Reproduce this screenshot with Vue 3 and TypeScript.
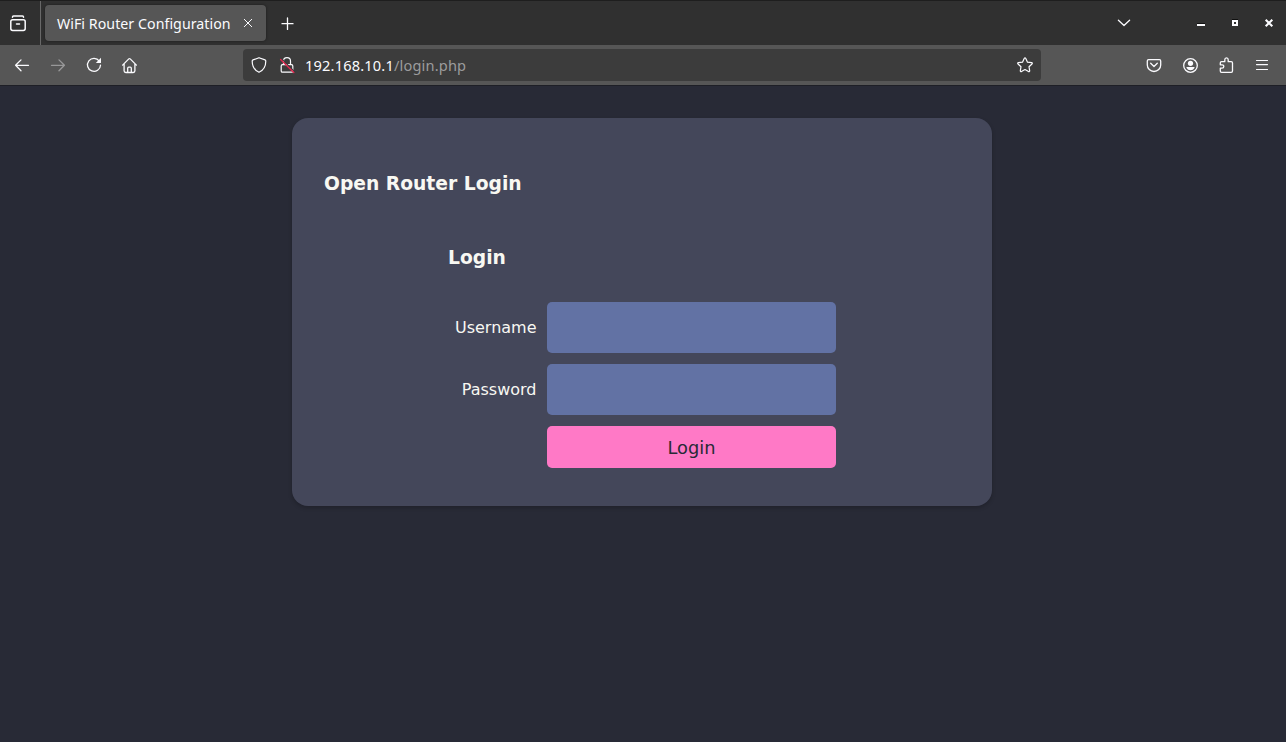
<script setup lang="ts">
import { ref } from 'vue'

const tabTitle = 'WiFi Router Configuration'
const host = '192.168.10.1'
const path = '/login.php'
const username = ref('')
const password = ref('')
</script>

<template>
  <div class="window">
    <header class="tabbar">
      <div class="overview">
        <svg width="20" height="20" viewBox="0 0 20 20">
          <path d="M4.500 4.200v-.2q0-1 1-1h9q1 0 1 1v.2M4.700 6.700h10.600q1.900 0 1.900 1.900v7q0 1.900-1.900 1.900H4.700q-1.900 0-1.900-1.900v-7q0-1.900 1.900-1.900z" />
          <path d="M8.500 10.900h3" />
        </svg>
      </div>
      <div class="tab">
        <span class="title">{{ tabTitle }}</span>
        <svg class="tab-close" width="10" height="10" viewBox="0 0 10 10"><path d="M1.300 1.300l7.400 7.400M8.700 1.300L1.300 8.700" /></svg>
      </div>
      <svg class="plus" width="13" height="13" viewBox="0 0 13 13"><path d="M6.500 1v11.500M1 6.700h11" /></svg>
      <div class="controls">
        <svg class="chevron" width="14" height="10" viewBox="0 0 14 10"><path d="M1.400 2.200L7 7.500l5.600-5.300" /></svg>
        <svg class="control" width="10" height="10" viewBox="0 0 10 10"><path class="fill shade" d="M1 5h8v1H1z" /><path class="fill" d="M1 6h8v2H1z" /></svg>
        <svg class="control" width="10" height="10" viewBox="0 0 10 10"><path class="fill shade" d="M2 1h6v1H2z" /><path class="fill" fill-rule="evenodd" d="M2 2h6v6H2zM4 4v2h2V4z" /></svg>
        <svg class="control" width="10" height="10" viewBox="0 0 10 10"><path class="heavy" d="M1.700 1.700l6.600 6.600M8.300 1.700L1.700 8.300" /></svg>
      </div>
    </header>

    <nav class="toolbar">
      <div class="slots">
        <span class="slot"><svg width="20" height="20" viewBox="0 0 20 20"><path d="M16.500 10.300H3.800M9 4.900L3.600 10.300 9 15.700" /></svg></span>
        <span class="slot disabled"><svg width="20" height="20" viewBox="0 0 20 20"><path d="M3.500 10.300h12.700M11 4.900l5.400 5.400-5.400 5.400" /></svg></span>
        <span class="slot"><svg width="20" height="20" viewBox="0 0 20 20"><path d="M15.300 6.100A6.500 6.500 0 1 0 16.500 10.200" /><path class="fill" d="M17 2.800v4.700q0 .5-.5.5h-4.700z" /></svg></span>
        <span class="slot"><svg width="20" height="20" viewBox="0 0 20 20"><path d="M2.600 10.100l6.200-6.200q.7-.7 1.400 0l6.200 6.200M4.100 9v6.800q0 1.700 1.700 1.700h7.400q1.700 0 1.700-1.700V9M7.700 17.200v-4q0-1 1-1h1.600q1 0 1 1v4" /></svg></span>
      </div>

      <div class="address">
        <svg width="20" height="20" viewBox="0 0 20 20"><path d="M10 2.700l6 2.200q.8.300.8 1.100c0 5-2.200 9.200-6.800 11.300C5.400 15.200 3.200 11 3.200 6q0-.8.8-1.100z" /></svg>
        <svg class="lock" width="20" height="20" viewBox="0 0 20 20">
          <path d="M6.500 9.500V6q0-3.300 3.500-3.300T13.500 6v3.500M5.500 9.700h9q1.300 0 1.300 1.300v4.900q0 1.300-1.300 1.300h-9q-1.300 0-1.300-1.300V11q0-1.300 1.300-1.300z" />
          <path class="gap" d="M4.500 3.700l13 13" />
          <path class="slash" d="M3.600 4.400l13.200 13.100" />
        </svg>
        <span class="url">{{ host }}<span class="path">{{ path }}</span></span>
        <svg class="star" width="20" height="20" viewBox="0 0 20 20"><path d="M9.200 3.500q.8-1.300 1.600 0l1.700 3.700 4.100.5q1.200.3.400 1.300l-3 2.700.7 4.100q0 1.200-1.200.8L10 14.500l-3.500 2.100q-1.200.4-1.200-.8l.7-4.100L3 9q-.8-1 .4-1.300l4.100-.5z" /></svg>
      </div>

      <div class="slots right">
        <span class="slot"><svg width="20" height="20" viewBox="0 0 20 20"><path d="M4.600 4.600h10.800q1.300 0 1.300 1.300v4c0 3.700-3 6.600-6.700 6.600s-6.700-2.900-6.700-6.600v-4q0-1.300 1.300-1.300zM6.700 8.300l3.300 3.200 3.300-3.200" /></svg></span>
        <span class="slot"><svg width="20" height="20" viewBox="0 0 20 20"><circle cx="10.500" cy="10.500" r="6.800" /><circle class="fill" cx="10.500" cy="8.300" r="2.600" /><path class="fill" d="M7 11.900h7q.8 0 .6.800-1.300 2.600-4.100 2.600t-4.100-2.600q-.2-.8.600-.8z" /></svg></span>
        <span class="slot"><svg width="20" height="20" viewBox="0 0 20 20"><path d="M5.500 6.700h3.300V4.800q0-1.900 1.700-1.900t1.700 1.900v1.900h3q1.300 0 1.300 1.300v8q0 1.300-1.300 1.300H5.600q-1.300 0-1.300-1.300v-2.800H6q1.800 0 1.800-1.700T6 9.800H4.300V8q0-1.300 1.200-1.300z" /></svg></span>
        <span class="slot"><svg class="menu" width="20" height="20" viewBox="0 0 20 20"><path d="M4.500 5.500h11M4.500 9.600h11M4.500 14.500h11" /></svg></span>
      </div>
    </nav>

    <main class="page">
      <section class="card">
        <h3 class="heading">Open Router Login</h3>
        <form class="form" @submit.prevent>
          <h3 class="heading">Login</h3>
          <label for="username">Username</label>
          <input id="username" v-model="username" type="text" />
          <label for="password">Password</label>
          <input id="password" v-model="password" type="password" />
          <button type="submit">Login</button>
        </form>
      </section>
    </main>
  </div>
</template>

<style>
html,
body {
  margin: 0;
  background: #282a36;
}
</style>

<style scoped>
.window {
  width: 100%;
  height: 742px;
  display: flex;
  flex-direction: column;
  overflow: hidden;
  font-family: "DejaVu Sans", sans-serif;
  color: #f8f8f2;
}
.window * {
  box-sizing: border-box;
}
svg {
  display: block;
  flex: none;
  fill: none;
  stroke: #fbfbfe;
  stroke-width: 1.3;
  stroke-linecap: round;
  stroke-linejoin: round;
}
.fill {
  fill: #fbfbfe;
  stroke: none;
}
.shade {
  fill: #101010;
}
.tabbar {
  height: 45px;
  flex: none;
  display: flex;
  align-items: center;
  background: #303030;
  border-top: 1px solid #1e1e1e;
}
.overview {
  width: 41px;
  height: 44px;
  padding-left: 8px;
  display: flex;
  align-items: center;
  border-right: 1px solid #686868;
}
.overview svg {
  stroke-width: 1.5;
}
.tab {
  width: 221px;
  height: 36px;
  margin-left: 4px;
  padding: 0 13px 0 12px;
  display: flex;
  align-items: center;
  justify-content: space-between;
  background: #565656;
  border-radius: 4px;
  box-shadow: 0 0 3px rgba(0, 0, 0, 0.45);
  font: 14.2px "Noto Sans", sans-serif;
  letter-spacing: 0.05px;
  color: #fbfbfe;
}
.title {
  white-space: nowrap;
}
.tab-close {
  stroke-width: 1;
}
.plus {
  margin-left: 15px;
  stroke-width: 1.3;
}
.controls {
  margin-left: auto;
  padding-right: 12px;
  display: flex;
  align-items: center;
}
.chevron {
  margin-right: 65px;
}
.control + .control {
  margin-left: 24px;
}
.heavy {
  stroke-width: 2.1;
  stroke-linecap: butt;
}
.toolbar {
  height: 40px;
  flex: none;
  display: flex;
  align-items: center;
  padding: 0 6px 0 4px;
  background: #565656;
}
.slots {
  display: flex;
}
.slot {
  width: 36px;
  display: flex;
  justify-content: center;
}
.disabled {
  opacity: 0.4;
}
.menu {
  stroke-width: 1.2;
}
.address {
  width: 798px;
  height: 32px;
  margin-left: 95px;
  padding: 0 6px;
  display: flex;
  align-items: center;
  background: #3c3c3c;
  border-radius: 4px;
  font: 14.6px "Noto Sans", sans-serif;
  letter-spacing: 0.17px;
  color: #fbfbfe;
}
.address svg {
  stroke-width: 1.2;
}
.lock {
  margin-left: 8px;
}
.lock .gap {
  stroke: #3c3c3c;
  stroke-width: 1.2;
}
.lock .slash {
  stroke: #e22850;
  stroke-width: 1.4;
}
.url {
  margin-left: 8px;
}
.path {
  color: #9b9b9d;
}
.star {
  margin-left: auto;
}
.right {
  margin-left: auto;
}
.page {
  flex: 1;
  padding-top: 32px;
  border-top: 1px solid #1e1f26;
  background: #282a36;
}
.card {
  width: 700px;
  height: 388px;
  margin-left: 292px;
  padding: 55px 32px 0;
  border-radius: 16px;
  background: #44475a;
  box-shadow: 0 2px 4px rgba(0, 0, 0, 0.2);
}
.heading {
  margin: 0;
  font-size: 18.72px;
  line-height: 22px;
  font-weight: 700;
}
.form {
  width: 389px;
  margin: 52px 0 0 124px;
  display: grid;
  grid-template-columns: 88.5px 289px;
  column-gap: 10.5px;
  row-gap: 11px;
  align-items: center;
}
.form .heading {
  grid-column: 1 / -1;
  margin-bottom: 22px;
}
label {
  text-align: right;
  font-size: 16px;
}
input {
  width: 100%;
  height: 51px;
  padding: 0 16px;
  border: 0;
  border-radius: 5px;
  background: #6272a4;
  color: #f8f8f2;
  font-size: 16px;
  outline: 0;
}
button {
  grid-column: 2;
  height: 42px;
  padding: 0;
  border: 0;
  border-radius: 5px;
  background: #ff79c6;
  color: #282a36;
  font: 17.8px "DejaVu Sans", sans-serif;
}
</style>
